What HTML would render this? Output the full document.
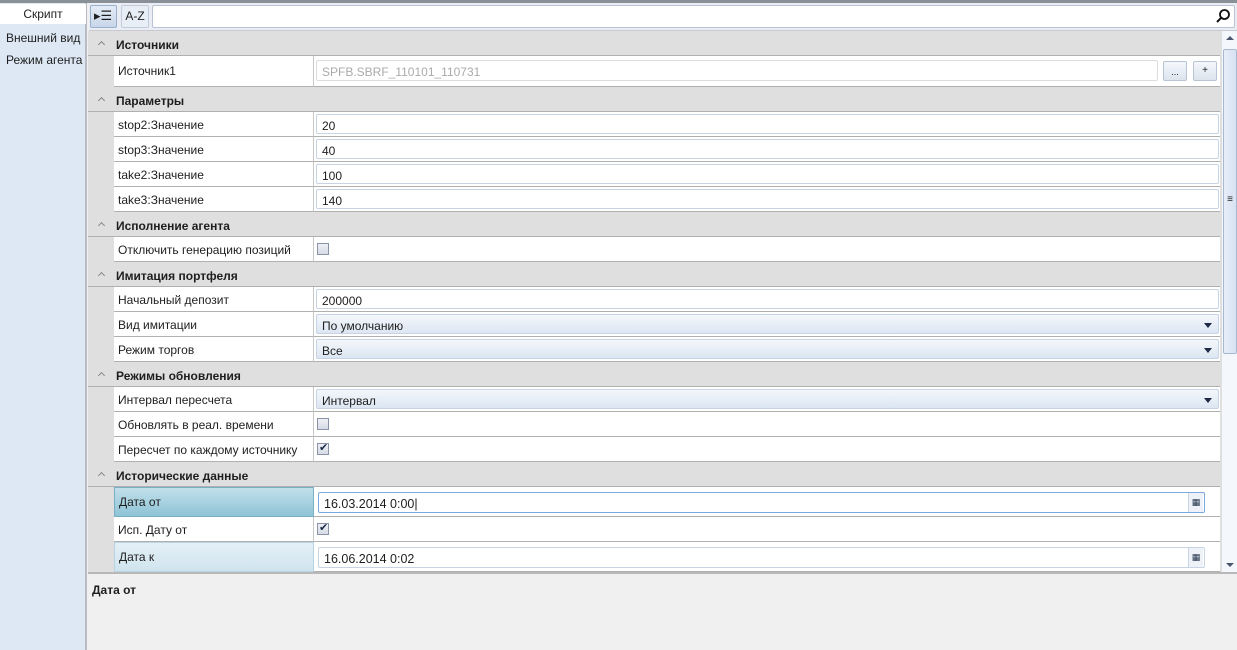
<!DOCTYPE html>
<html><head><meta charset="utf-8"><style>
*{box-sizing:border-box;margin:0;padding:0}
body{width:1237px;height:650px;overflow:hidden;background:#f0f0f0;font-family:"Liberation Sans","DejaVu Sans",sans-serif;font-size:12px;color:#1e1e1e;position:relative}
.a{position:absolute}
.side{left:0;top:0;width:87px;height:650px;background:#dde8f4;border-right:2px solid #b8bcc2}
.topbar{left:0;top:0;width:1237px;height:3px;background:#8a9098}
.cat{left:88px;width:1132px;height:25px;background:#dfdfdf;border-bottom:1px solid #b0b0b0;font-weight:bold;font-size:12px;padding:7px 0 0 28px}
.cat:before{content:"";position:absolute;left:11px;top:11px;width:4px;height:4px;border-left:1px solid #888;border-top:1px solid #888;transform:rotate(45deg)}
.gut{left:88px;width:26px;background:#dfdfdf}
.nm{left:114px;width:200px;background:#fff;border-right:1px solid #c8c8c8;border-bottom:1px solid #b0b0b0;padding-left:4px;line-height:26px}
.vl{left:314px;width:906px;background:#fff;border-bottom:1px solid #b0b0b0}
.tb{position:absolute;left:2px;right:1px;top:2px;bottom:2px;border:1px solid #c7d4e4;border-radius:2px;padding:4px 0 0 5px;background:#fff}
.dd{background:linear-gradient(#f4f7fb,#dce6f2)}
.dd:after{content:"";position:absolute;right:6px;top:8px;border:4px solid transparent;border-top:5px solid #1e2a44}
.cb{position:absolute;left:3px;top:6px;width:12px;height:12px;border:1px solid #8a93a6;background:linear-gradient(#eef0f6,#d6dbe6)}
.ck:after{content:"✔";position:absolute;left:1px;top:-3px;font-size:11px;color:#1a2a44}
.cal{position:absolute;right:1px;top:0;bottom:0;width:15px;border-left:1px solid #c7d4e4;background:#eef2f8;font-size:9px;text-align:center;padding-top:4px;color:#1a2a44}
</style></head><body>
<div class="a side"></div>
<div class="a topbar"></div>
<div class="a" style="left:0;top:4px;width:86px;height:20px;background:#fff;text-align:center;line-height:21px">Скрипт</div>
<div class="a" style="left:6px;top:31px">Внешний вид</div>
<div class="a" style="left:6px;top:53px">Режим агента</div>
<!-- toolbar -->
<div class="a" style="left:89px;top:3px;width:1148px;height:28px;background:#eaeef4;border-bottom:1px solid #c8ccd2"></div>
<div class="a" style="left:90px;top:5px;width:27px;height:23px;border:1px solid #9ab0cc;background:linear-gradient(#e4ecf6,#c8d6ea);border-radius:2px;font-size:13px;padding-left:3px;line-height:20px">▸☰</div>
<div class="a" style="left:121px;top:5px;width:28px;height:23px;border:1px solid #c0ccdc;background:#e8eef6;border-radius:2px;text-align:center;line-height:21px">A-Z</div>
<div class="a" style="left:152px;top:5px;width:1083px;height:23px;border:1px solid #b8c4d4;background:#fff;border-radius:2px"></div>
<svg class="a" style="left:1215px;top:8px" width="16" height="16"><circle cx="9.5" cy="6.5" r="4.5" fill="none" stroke="#111" stroke-width="1.8"/><line x1="6.3" y1="9.7" x2="2" y2="14" stroke="#111" stroke-width="2"/></svg>
<!-- grid bg -->
<div class="a" style="left:88px;top:31px;width:1134px;height:541px;background:#dfdfdf"></div>
<!-- scrollbar -->
<div class="a" style="left:1222px;top:31px;width:15px;height:541px;background:#f4f7fc"></div>
<div class="a" style="left:1226px;top:36px;border:4px solid transparent;border-bottom:4px solid #4a5670;border-top:0"></div>
<div class="a" style="left:1223px;top:49px;width:14px;height:305px;background:linear-gradient(90deg,#e8eef8,#d6e2f2);border:1px solid #a8b8d0;border-radius:2px;text-align:center;line-height:300px;font-size:10px">≡</div>
<div class="a" style="left:1226px;top:563px;border:4px solid transparent;border-top:4px solid #4a5670;border-bottom:0"></div>

<div class="a cat" style="top:31px">Источники</div>
<div class="a gut" style="top:56px;height:31px"></div>
<div class="a nm" style="top:56px;height:31px;line-height:31px">Источник1</div>
<div class="a vl" style="top:56px;height:31px"><div class="tb" style="right:62px;top:4px;bottom:5px;color:#aaa;border-color:#ddd">SPFB.SBRF_110101_110731</div>
<div class="a" style="left:849px;top:5px;width:24px;height:20px;border:1px solid #b8c4d4;border-radius:2px;background:linear-gradient(#f4f7fb,#dce4ee);text-align:center;font-size:9px;line-height:20px">...</div>
<div class="a" style="left:879px;top:5px;width:24px;height:20px;border:1px solid #b8c4d4;border-radius:2px;background:linear-gradient(#f4f7fb,#dce4ee);text-align:center;font-size:10px;line-height:18px">+</div></div>

<div class="a cat" style="top:87px">Параметры</div>
<div class="a gut" style="top:112px;height:100px"></div>
<div class="a nm" style="top:112px;height:25px">stop2:Значение</div><div class="a vl" style="top:112px;height:25px"><div class="tb">20</div></div>
<div class="a nm" style="top:137px;height:25px">stop3:Значение</div><div class="a vl" style="top:137px;height:25px"><div class="tb">40</div></div>
<div class="a nm" style="top:162px;height:25px">take2:Значение</div><div class="a vl" style="top:162px;height:25px"><div class="tb">100</div></div>
<div class="a nm" style="top:187px;height:25px">take3:Значение</div><div class="a vl" style="top:187px;height:25px"><div class="tb">140</div></div>

<div class="a cat" style="top:212px">Исполнение агента</div>
<div class="a nm" style="top:237px;height:25px">Отключить генерацию позиций</div><div class="a vl" style="top:237px;height:25px"><div class="cb"></div></div>

<div class="a cat" style="top:262px">Имитация портфеля</div>
<div class="a nm" style="top:287px;height:25px">Начальный депозит</div><div class="a vl" style="top:287px;height:25px"><div class="tb">200000</div></div>
<div class="a nm" style="top:312px;height:25px">Вид имитации</div><div class="a vl" style="top:312px;height:25px"><div class="tb dd">По умолчанию</div></div>
<div class="a nm" style="top:337px;height:25px">Режим торгов</div><div class="a vl" style="top:337px;height:25px"><div class="tb dd">Все</div></div>

<div class="a cat" style="top:362px">Режимы обновления</div>
<div class="a nm" style="top:387px;height:25px">Интервал пересчета</div><div class="a vl" style="top:387px;height:25px"><div class="tb dd">Интервал</div></div>
<div class="a nm" style="top:412px;height:25px">Обновлять в реал. времени</div><div class="a vl" style="top:412px;height:25px"><div class="cb"></div></div>
<div class="a nm" style="top:437px;height:25px">Пересчет по каждому источнику</div><div class="a vl" style="top:437px;height:25px"><div class="cb ck"></div></div>

<div class="a cat" style="top:462px">Исторические данные</div>
<div class="a nm" style="top:487px;height:30px;background:linear-gradient(#c2e0ea,#8ec4d6);border:1px solid #7ab0c4;line-height:28px">Дата от</div>
<div class="a vl" style="top:487px;height:30px"><div class="tb" style="top:5px;bottom:3px;border-color:#7aa8e0;font-size:12.5px;padding-top:4px;left:4px;right:15px">16.03.2014 0:00|<div class="cal">▦</div></div></div>
<div class="a nm" style="top:517px;height:25px">Исп. Дату от</div><div class="a vl" style="top:517px;height:25px"><div class="cb ck"></div></div>
<div class="a nm" style="top:542px;height:30px;background:linear-gradient(#e4f0f6,#d0e4ee);border:1px solid #b8d4e2;line-height:28px">Дата к</div>
<div class="a vl" style="top:542px;height:30px"><div class="tb" style="top:5px;bottom:3px;font-size:12.5px;padding-top:4px;left:4px;right:15px">16.06.2014 0:02<div class="cal">▦</div></div></div>

<!-- bottom -->
<div class="a" style="left:88px;top:572px;width:1149px;height:78px;background:#f0f0f0;border-top:2px solid #b8b8b8"></div>
<div class="a" style="left:92px;top:583px;font-weight:bold;font-size:12px">Дата от</div>
</body></html>
